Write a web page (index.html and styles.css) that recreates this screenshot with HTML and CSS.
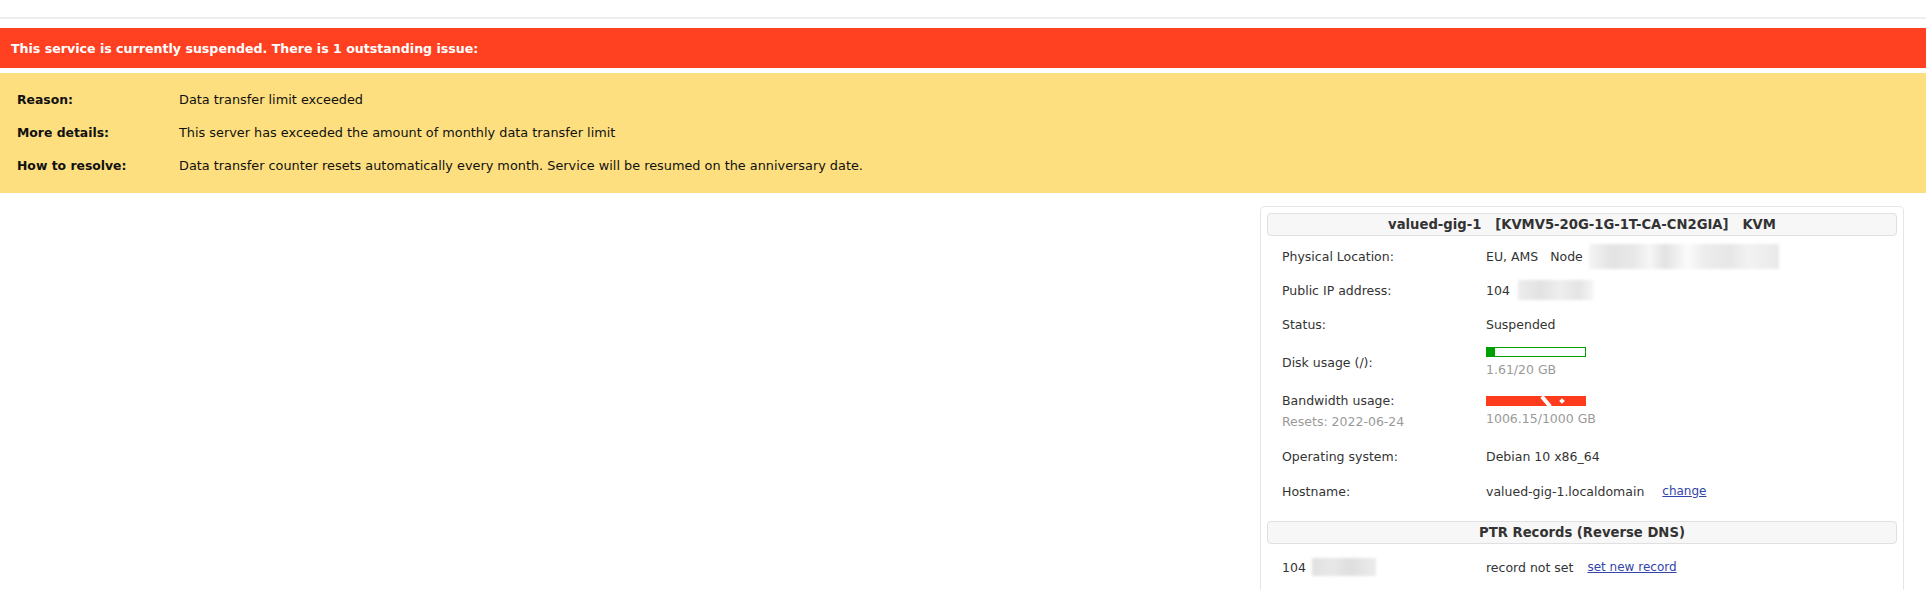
FILE: index.html
```html
<!DOCTYPE html>
<html lang="en">
<head>
<meta charset="utf-8">
<title>Service</title>
<link rel="stylesheet" href="styles.css">
</head>
<body>
<div class="topbar"></div>

<div class="alert-red">This service is currently suspended. There is 1 outstanding issue:</div>

<div class="alert-yellow">
  <div class="issue-row"><div class="issue-label">Reason:</div><div class="issue-value">Data transfer limit exceeded</div></div>
  <div class="issue-row"><div class="issue-label">More details:</div><div class="issue-value">This server has exceeded the amount of monthly data transfer limit</div></div>
  <div class="issue-row"><div class="issue-label">How to resolve:</div><div class="issue-value">Data transfer counter resets automatically every month. Service will be resumed on the anniversary date.</div></div>
</div>

<div class="main">
  <div class="panel">
    <div class="panel-head">valued-gig-1&nbsp;&nbsp;&nbsp;[KVMV5-20G-1G-1T-CA-CN2GIA]&nbsp;&nbsp;&nbsp;KVM</div>
    <div class="info">
      <div class="row">
        <div class="lbl">Physical Location:</div>
        <div class="val">EU, AMS&nbsp;&nbsp;&nbsp;Node<span class="redact redact-node"></span></div>
      </div>
      <div class="row">
        <div class="lbl">Public IP address:</div>
        <div class="val">104<span class="redact redact-ip"></span></div>
      </div>
      <div class="row">
        <div class="lbl">Status:</div>
        <div class="val">Suspended</div>
      </div>
      <div class="row row-disk">
        <div class="lbl">Disk usage (/):</div>
        <div class="val usage">
          <div class="bar bar-green"><div class="bar-fill" style="width:8%"></div></div>
          <div class="muted">1.61/20 GB</div>
        </div>
      </div>
      <div class="row row-bw">
        <div class="lbl lbl-stack">
          <div>Bandwidth usage:</div>
          <div class="muted">Resets: 2022-06-24</div>
        </div>
        <div class="val usage">
          <div class="bar bar-red"><span class="mark mark-a"></span><span class="mark mark-b"></span></div>
          <div class="muted">1006.15/1000 GB</div>
        </div>
      </div>
      <div class="row">
        <div class="lbl">Operating system:</div>
        <div class="val">Debian 10 x86_64</div>
      </div>
      <div class="row row-host">
        <div class="lbl">Hostname:</div>
        <div class="val">valued-gig-1.localdomain<a class="link" href="#">change</a></div>
      </div>
    </div>
    <div class="panel-head ptr-head">PTR Records (Reverse DNS)</div>
    <div class="info">
      <div class="row row-ptr">
        <div class="lbl">104<span class="redact redact-ptr"></span></div>
        <div class="val">record not set<a class="link link-ptr" href="#">set new record</a></div>
      </div>
    </div>
  </div>
</div>
</body>
</html>
```

FILE: styles.css
```css
html, body {
  margin: 0;
  padding: 0;
  background: #ffffff;
}

body {
  font-family: "DejaVu Sans", Verdana, sans-serif;
  font-size: 12.5px;
  color: #333333;
  overflow: hidden;
}

.topbar {
  height: 17px;
  border-bottom: 2px solid #eeeeee;
  margin-bottom: 9px;
}

.alert-red {
  height: 40px;
  background: #ff4122;
  color: #ffffff;
  font-weight: bold;
  font-size: 12.6px;
  display: flex;
  align-items: center;
  padding-left: 11px;
}

.alert-yellow {
  margin-top: 5px;
  background: #fddf80;
  padding: 10px 0 11px 17px;
}

.issue-row {
  display: flex;
  align-items: center;
  height: 33px;
  color: #111111;
}

.issue-label {
  width: 162px;
  font-weight: bold;
  font-size: 12.4px;
}

.issue-value {
  font-size: 12.85px;
}

.main {
  display: flex;
  justify-content: flex-end;
  padding: 13px 22px 0 0;
}

.panel {
  width: 630px;
  border: 1px solid #e6e6e6;
  border-bottom: none;
  border-radius: 5px 5px 0 0;
  padding: 6px 6px 20px 6px;
}

.panel-head {
  height: 21px;
  border: 1px solid #e0e0e0;
  border-radius: 4px;
  background: #f7f7f7;
  display: flex;
  align-items: center;
  justify-content: center;
  font-weight: bold;
  font-size: 13.2px;
  color: #333333;
}

.ptr-head {
  margin-top: 11px;
}

.info {
  padding-top: 3px;
}

.row {
  display: flex;
  align-items: center;
  height: 34px;
  padding-left: 15px;
  line-height: 15px;
}

.row-disk {
  height: 42px;
}

.row-bw {
  height: 56px;
}

.row-host {
  height: 37px;
}

.row-ptr {
  height: 36px;
  padding-top: 2px;
}

.lbl {
  width: 204px;
  flex: none;
  display: flex;
  align-items: center;
}

.lbl-stack {
  flex-direction: column;
  align-items: flex-start;
  line-height: 21px;
}

.val {
  display: flex;
  align-items: center;
}

.usage {
  flex-direction: column;
  align-items: flex-start;
  gap: 5px;
}

.muted {
  color: #9a9a9a;
}

.bar {
  position: relative;
  width: 98px;
  height: 8px;
  border: 1px solid #00a000;
  background: #ffffff;
}

.bar-fill {
  height: 100%;
  background: #00a000;
}

.bar-red {
  background: #ff3b1d;
  border-color: #ff3b1d;
}

.mark {
  position: absolute;
  background: #ffffff;
}

.mark-a {
  left: 57px;
  top: -2px;
  width: 4px;
  height: 13px;
  transform: rotate(-40deg);
}

.mark-b {
  left: 73px;
  top: 2px;
  width: 4px;
  height: 4px;
  transform: rotate(45deg);
}

.link {
  color: #3344aa;
  text-decoration: underline;
  font-size: 12px;
  margin-left: 18px;
}

.link-ptr {
  margin-left: 14px;
}

.redact {
  display: inline-block;
  filter: blur(1.5px);
}

.redact-node {
  width: 190px;
  height: 25px;
  margin-left: 6px;
  background: linear-gradient(90deg, #f4f4f4 0%, #e3e3e3 12%, #e8e8e8 24%, #f6f6f6 32%, #e2e2e2 40%, #fbfbfb 52%, #ededed 60%, #e6e6e6 74%, #f2f2f2 84%, #e9e9e9 100%);
}

.redact-ip {
  width: 76px;
  height: 20px;
  margin-left: 8px;
  background: linear-gradient(90deg, #ececec 0%, #e2e2e2 30%, #eeeeee 55%, #e4e4e4 80%, #f7f7f7 100%);
}

.redact-ptr {
  width: 64px;
  height: 18px;
  margin-left: 6px;
  background: linear-gradient(90deg, #e0e0e0 0%, #e8e8e8 30%, #dedede 60%, #ececec 100%);
}
```
